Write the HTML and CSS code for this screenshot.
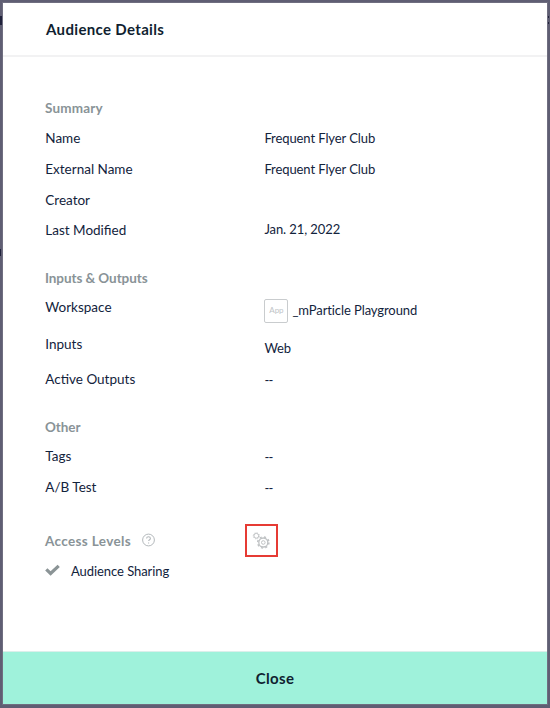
FILE: index.html
```html
<!DOCTYPE html>
<html lang="en">
<head>
<meta charset="utf-8">
<title>Audience Details</title>
<link rel="stylesheet" href="styles.css">
</head>
<body>
<i class="behind behind-a"></i><i class="behind behind-b"></i><i class="behind behind-c"></i><i class="behind behind-d"></i>
<main class="modal">
  <header class="header"><h1>Audience Details</h1></header>
  <div class="content">
    <section class="section summary">
      <h2>Summary</h2>
      <div class="row"><span class="label">Name</span><span class="value">Frequent Flyer Club</span></div>
      <div class="row"><span class="label">External Name</span><span class="value">Frequent Flyer Club</span></div>
      <div class="row short"><span class="label">Creator</span></div>
      <div class="row"><span class="label">Last Modified</span><span class="value date">Jan. 21, 2022</span></div>
    </section>
    <section class="section io">
      <h2>Inputs &amp; Outputs</h2>
      <div class="row workspace"><span class="label">Workspace</span><span class="value app-value"><span class="app">App</span><span class="app-name">_mParticle Playground</span></span></div>
      <div class="row inputs"><span class="label">Inputs</span><span class="value">Web</span></div>
      <div class="row"><span class="label">Active Outputs</span><span class="value empty">--</span></div>
    </section>
    <section class="section other">
      <h2>Other</h2>
      <div class="row"><span class="label">Tags</span><span class="value empty">--</span></div>
      <div class="row"><span class="label">A/B Test</span><span class="value empty">--</span></div>
    </section>
    <section class="section access">
      <div class="access-head">
        <h2>Access Levels</h2>
        <svg class="help" width="14" height="14" viewBox="0 0 14 14" fill="none" stroke="#b4b9bc"><circle cx="6.5" cy="7" r="5.9"/><path d="M4.6 5.5c0-1.2.8-1.8 1.9-1.8s1.9.7 1.9 1.7c0 1.3-1.8 1.3-1.8 2.7M6.6 9.4v1.2" stroke-width="1.1"/></svg>
        <span class="gears">
          <svg width="26" height="26" viewBox="0 0 26 26" fill="none" stroke="#bfc2c4">
            <circle cx="7.3" cy="7.8" r="2.4" stroke-width="1"/>
            <circle cx="7.3" cy="7.8" r="3.1" stroke-width=".8" stroke-dasharray="1.2 1.23"/>
            <circle cx="14.3" cy="14.5" r="4.5" stroke-width="1.3"/>
            <circle cx="14.3" cy="14.5" r="5.6" stroke-width="1.5" stroke-dasharray="2.1 2.3"/>
            <circle cx="14.3" cy="14.5" r="1.8" stroke-width="1"/>
          </svg>
        </span>
      </div>
      <div class="permission">
        <svg class="check" width="15" height="12" viewBox="0 0 15 12"><path d="M1.3 5.4l4.3 4L13.7 1.9" fill="none" stroke="#8b9496" stroke-width="3.3"/></svg>
        <span class="sharing">Audience Sharing</span>
      </div>
    </section>
  </div>
  <button class="close" type="button">Close</button>
</main>
</body>
</html>
```
FILE: styles.css
```css
* { box-sizing: border-box; }
body {
  margin: 0;
  padding: 3px 3px 4px;
  height: 708px;
  overflow: hidden;
  background: #5f5e73;
  color: #12233c;
  font: 13.5px/20px Lato, "Liberation Sans", sans-serif;
}
.modal {
  display: flex;
  flex-direction: column;
  width: 544px;
  height: 701px;
  background: #fff;
  box-shadow: 0 0 0 1px #6f6e80;
}
.header { height: 54px; padding: 16px 43px 0; border-bottom: 2px solid #f2f2f3; }
h1, h2 { margin: 0; }
h1 { font-size: 15px; line-height: 20px; font-weight: 700; letter-spacing: .34px; color: #101f31; }
.content { flex: 1; padding: 41px 42px 0; }
h2 { height: 29px; font-size: 13.5px; line-height: 20px; font-weight: 700; letter-spacing: -.08px; color: #899397; }
.summary h2 { height: 30px; letter-spacing: .2px; }
.row { display: grid; grid-template-columns: 219px 1fr; height: 31px; }
.row.short { height: 30px; }
.label { padding-left: .3px; letter-spacing: 0; }
.value { padding-left: .4px; font-size: 13px; letter-spacing: -.09px; }
.value.empty { padding-top: 1px; letter-spacing: -.7px; }
.date { margin-top: -1px; }
.section .row:last-child { height: 48px; }
.workspace.row { height: 37px; }
.inputs.row { height: 35px; }
.inputs .value { margin-top: 4px; }
.app-value { display: flex; gap: 4px; margin-top: 3px; }
.app {
  width: 24px; height: 24px; margin-top: -1px;
  border: 1px solid #c9ccce; border-radius: 2px;
  color: #c0c4c7; font-size: 8px; line-height: 21px; text-align: center;
}
.other .row:last-child { height: 54px; }
.access-head { display: flex; height: 30px; }
.access-head h2 { width: 97px; letter-spacing: .35px; }
.help { margin-top: 2px; }
.gears { width: 33px; height: 33px; margin: -7px 0 0 89px; padding: 2px; border: 2px solid #e63b34; }
.gears svg { display: block; }
.permission { display: flex; gap: 11px; }
.check { margin-top: 3px; }
.sharing { font-size: 13px; letter-spacing: -.06px; }
.close {
  height: 53px; padding: 0; border: 0; border-top: 1px solid #dcefeb;
  background: #9ff2db; color: #101f31;
  font: 700 15px/20px Lato, "Liberation Sans", sans-serif; letter-spacing: .35px;
}
/* Slivers of the dimmed page visible around the dialog */
.behind { position: absolute; background: #20223c; }
.behind-a { left: 0; top: 16px; width: 2px; height: 9px; }
.behind-b { left: 0; top: 249px; width: 1px; height: 7px; }
.behind-c { left: 548px; top: 16px; width: 1px; height: 2px; }
.behind-d { left: 548px; top: 22px; width: 1px; height: 2px; }
```
